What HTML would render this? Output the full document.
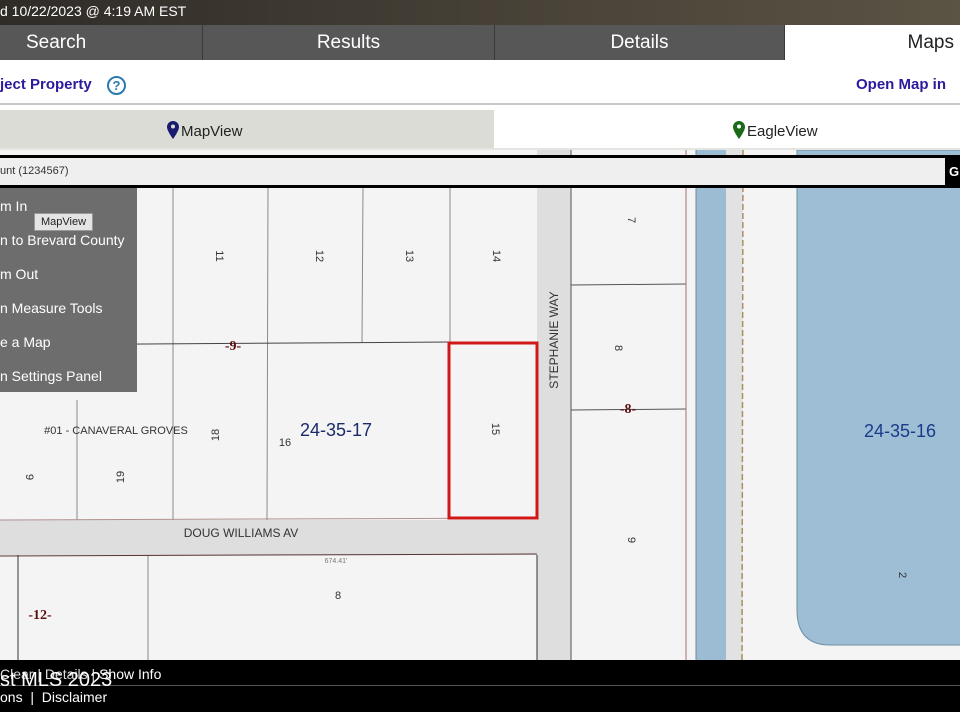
<!DOCTYPE html>
<html><head><meta charset="utf-8"><style>
*{margin:0;padding:0;box-sizing:border-box}
body{width:960px;height:712px;overflow:hidden;position:relative;background:#fff;font-family:"Liberation Sans",sans-serif}
.a{position:absolute;white-space:nowrap}
.tab{position:absolute;top:25px;height:35px;background:#575757;color:#fff;font-size:19px;line-height:35px;text-align:center;border-right:1px solid #3a3a3a}
.menu div{position:absolute;left:0;color:#fff;font-size:14px}
</style></head><body>
<div class="a" style="left:0;top:0;width:960px;height:25px;background:linear-gradient(90deg,#2f2b27,#4a4439 60%,#5b5344);color:#fff;font-size:14px;line-height:23px;padding-left:0">d 10/22/2023 @ 4:19 AM EST</div>
<div class="tab" style="left:0;width:203px;text-align:left;padding-left:26px">Search</div>
<div class="tab" style="left:203px;width:292px">Results</div>
<div class="tab" style="left:495px;width:290px">Details</div>
<div class="a" style="left:785px;top:25px;width:175px;height:35px;background:#fff;color:#222;font-size:19px;line-height:35px;text-align:right;padding-right:6px">Maps</div>
<div class="a" style="left:0;top:76px;color:#2a1a9c;font-weight:bold;font-size:15px">ject Property</div>
<div class="a" style="left:107px;top:76px;width:19px;height:19px;border:2px solid #2a7ab0;border-radius:50%;color:#2a7ab0;font-size:13px;font-weight:bold;text-align:center;line-height:15px">?</div>
<div class="a" style="left:856px;top:76px;color:#2a1a9c;font-weight:bold;font-size:15px">Open Map in</div>
<div class="a" style="left:0;top:103px;width:960px;height:2px;background:#c8c8c8"></div>
<div class="a" style="left:0;top:110px;width:494px;height:38px;background:#dcdcd6"></div>
<div class="a" style="left:0;top:148px;width:960px;height:8px;background:#e4e4e0"></div>
<svg class="a" style="left:167px;top:121px" width="12" height="18" viewBox="0 0 12 18"><path d="M6 0C2.7 0 0 2.6 0 6c0 4 6 12 6 12s6-8 6-12C12 2.6 9.3 0 6 0z" fill="#1a1a6e"/><circle cx="6" cy="5.5" r="2" fill="#dcdcd6"/></svg>
<div class="a" style="left:181px;top:123px;font-size:15px;color:#222">MapView</div>
<svg class="a" style="left:733px;top:121px" width="12" height="18" viewBox="0 0 12 18"><path d="M6 0C2.7 0 0 2.6 0 6c0 4 6 12 6 12s6-8 6-12C12 2.6 9.3 0 6 0z" fill="#1a6a1a"/><circle cx="6" cy="5.5" r="2" fill="#fff"/></svg>
<div class="a" style="left:747px;top:123px;font-size:15px;color:#222">EagleView</div>
<svg class="a" style="left:0;top:150px" width="960" height="510" viewBox="0 150 960 510">
<rect x="0" y="150" width="960" height="510" fill="#f4f4f4"/>
<rect x="537" y="150" width="34" height="510" fill="#dedede"/>
<rect x="0" y="520" width="537" height="35" fill="#dedede"/>
<rect x="696" y="150" width="30" height="510" fill="#9bbcd3"/>
<line x1="696" y1="150" x2="696" y2="660" stroke="#6b8aa0" stroke-width="1"/>
<rect x="726" y="150" width="17" height="510" fill="#e2e2e2"/>
<line x1="743" y1="150" x2="742" y2="660" stroke="#a89060" stroke-width="1.5" stroke-dasharray="6 3"/>
<path d="M797 150 H962 V645 H830 Q797 645 797 610 Z" fill="#9dbed5" stroke="#6e8ea5"/>
<g stroke="#8a8a8a" stroke-width="1">
<line x1="173" y1="188" x2="173" y2="520"/><line x1="268" y1="188" x2="267" y2="520"/>
<line x1="363" y1="188" x2="362" y2="343"/><line x1="450" y1="188" x2="450" y2="343"/>
<line x1="77" y1="400" x2="77" y2="520"/>
<line x1="0" y1="345" x2="450" y2="342" stroke="#444"/>
<line x1="571" y1="285" x2="686" y2="284" stroke="#555"/><line x1="571" y1="410" x2="686" y2="409" stroke="#555"/>
<line x1="686" y1="150" x2="686" y2="660" stroke="#a07070"/>
<line x1="571" y1="150" x2="571" y2="660" stroke="#555"/>
<line x1="18" y1="555" x2="18" y2="660" stroke="#333"/><line x1="148" y1="555" x2="148" y2="660"/>
<line x1="537" y1="555" x2="537" y2="660" stroke="#333"/>
<line x1="0" y1="520" x2="537" y2="518" stroke="#b09090"/><line x1="0" y1="556" x2="537" y2="554" stroke="#553333"/>
</g>
<rect x="449" y="343" width="88" height="175" fill="none" stroke="#d01818" stroke-width="3"/>
<g font-family="Liberation Sans,sans-serif" fill="#333" font-size="11">
<text x="216" y="256" transform="rotate(90 216 256)" text-anchor="middle">11</text>
<text x="316" y="256" transform="rotate(90 316 256)" text-anchor="middle">12</text>
<text x="406" y="256" transform="rotate(90 406 256)" text-anchor="middle">13</text>
<text x="493" y="256" transform="rotate(90 493 256)" text-anchor="middle">14</text>
<text x="492" y="429" transform="rotate(90 492 429)" text-anchor="middle">15</text>
<text x="219" y="435" transform="rotate(-90 219 435)" text-anchor="middle">18</text>
<text x="124" y="477" transform="rotate(-90 124 477)" text-anchor="middle">19</text>
<text x="26" y="477" transform="rotate(90 26 477)" text-anchor="middle">9</text>
<text x="628" y="220" transform="rotate(90 628 220)" text-anchor="middle">7</text>
<text x="615" y="348" transform="rotate(90 615 348)" text-anchor="middle">8</text>
<text x="628" y="540" transform="rotate(90 628 540)" text-anchor="middle">9</text>
<text x="899" y="575" transform="rotate(90 899 575)" text-anchor="middle">2</text>
<text x="285" y="446" text-anchor="middle">16</text>
<text x="338" y="599" text-anchor="middle">8</text>
<text x="116" y="434" text-anchor="middle" font-size="11">#01 - CANAVERAL GROVES</text>
<text x="241" y="537" text-anchor="middle" font-size="12">DOUG WILLIAMS AV</text>
<text x="558" y="340" transform="rotate(-90 558 340)" text-anchor="middle" font-size="12">STEPHANIE WAY</text>
<text x="336" y="436" text-anchor="middle" font-size="18" fill="#1a2a6a">24-35-17</text>
<text x="900" y="437" text-anchor="middle" font-size="18" fill="#1a3a8a">24-35-16</text>
<text x="336" y="563" text-anchor="middle" font-size="7" fill="#777">674.41'</text>
</g>
<g font-family="Liberation Serif,serif" font-weight="bold" fill="#5a1010" font-size="14">
<text x="233" y="350" text-anchor="middle">-9-</text><text x="628" y="413" text-anchor="middle">-8-</text><text x="40" y="619" text-anchor="middle">-12-</text>
</g>
</svg>
<div class="a" style="left:0;top:155px;width:960px;height:33px;background:#efefef;border-top:3px solid #000;border-bottom:3px solid #000"></div>
<div class="a" style="left:0;top:165px;font-size:11px;color:#333">unt (1234567)</div>
<div class="a" style="left:945px;top:158px;width:15px;height:27px;background:#000;color:#fff;font-weight:bold;font-size:13px;line-height:27px;padding-left:4px">G</div>
<div class="a menu" style="left:0;top:188px;width:137px;height:204px;background:#6d6d6d">
<div style="top:10px">m In</div><div style="top:44px">n to Brevard County</div><div style="top:78px">m Out</div>
<div style="top:112px">n Measure Tools</div><div style="top:146px">e a Map</div><div style="top:180px">n Settings Panel</div>
</div>
<div class="a" style="left:34px;top:213px;width:59px;height:18px;background:#e4e4e4;border:1px solid #999;font-size:11px;line-height:16px;text-align:center;color:#222">MapView</div>
<div class="a" style="left:0;top:660px;width:960px;height:52px;background:#000"></div>
<div class="a" style="left:0;top:685px;width:960px;height:1px;background:#555"></div>
<div class="a" style="left:0;top:666px;color:#ddd;font-size:14px">Clear&nbsp;|&nbsp;Details&nbsp;|&nbsp;<span style="color:#fff">Show Info</span></div>
<div class="a" style="left:0;top:669px;color:#fff;font-size:20px">st MLS 2023</div>
<div class="a" style="left:0;top:689px;color:#fff;font-size:14px">ons &nbsp;|&nbsp; Disclaimer</div>
</body></html>
